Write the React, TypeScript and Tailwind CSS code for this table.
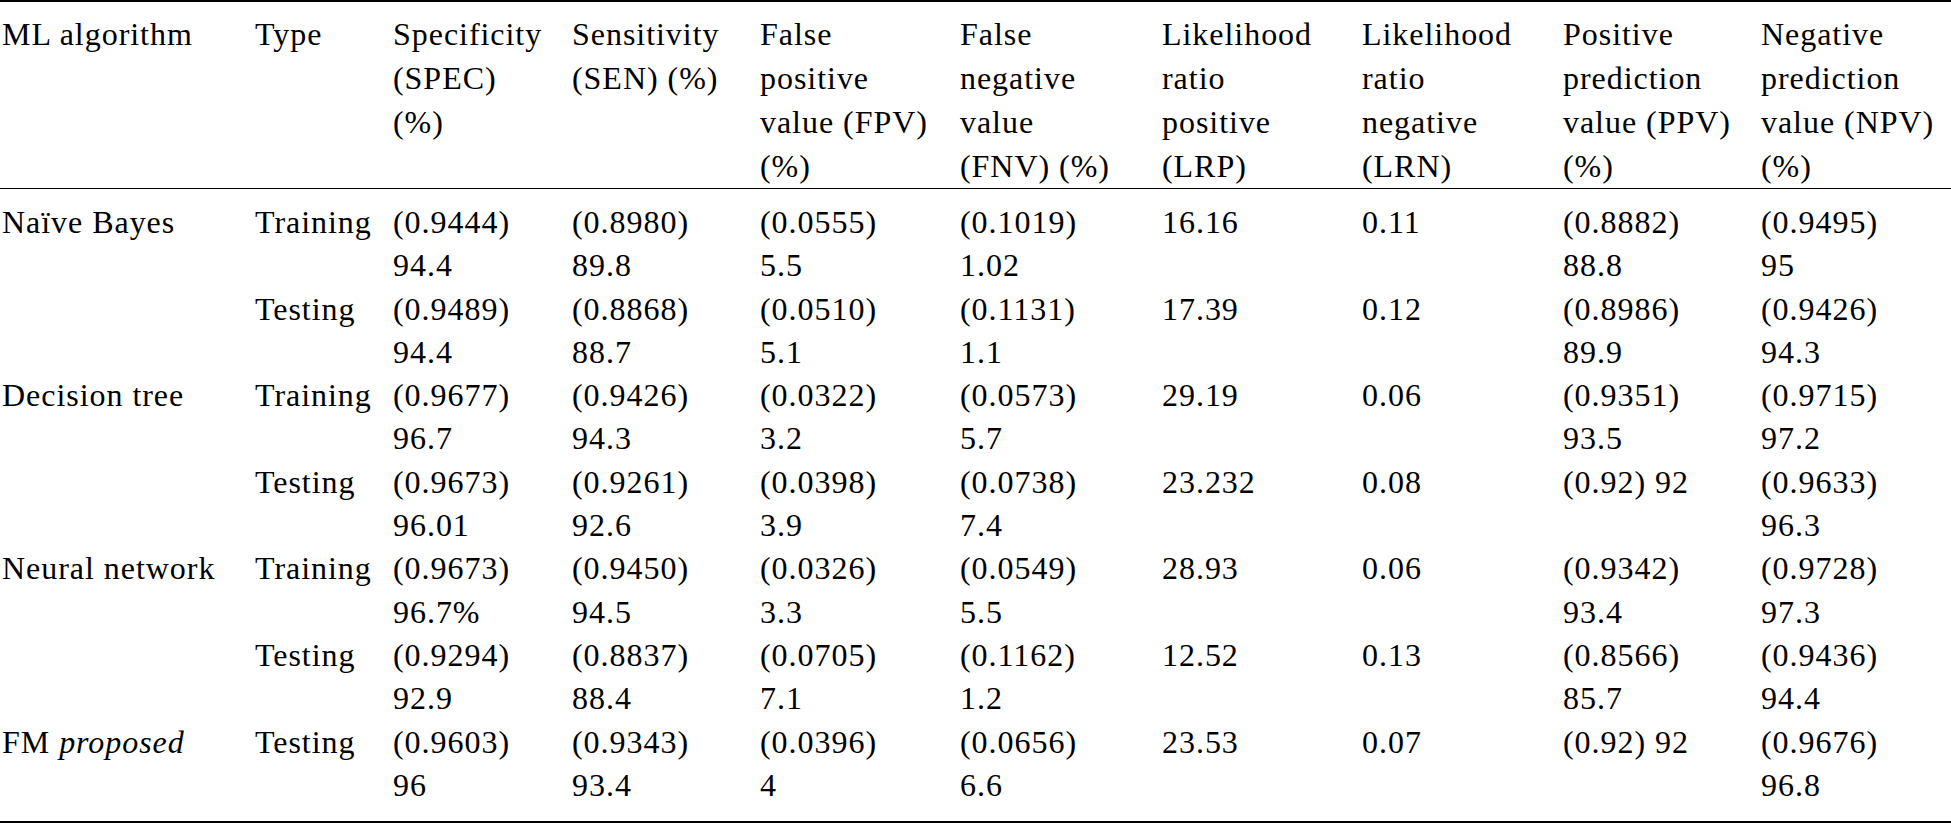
const headers = [
  'ML algorithm',
  'Type',
  'Specificity\n(SPEC)\n(%)',
  'Sensitivity\n(SEN) (%)',
  'False\npositive\nvalue (FPV)\n(%)',
  'False\nnegative\nvalue\n(FNV) (%)',
  'Likelihood\nratio\npositive\n(LRP)',
  'Likelihood\nratio\nnegative\n(LRN)',
  'Positive\nprediction\nvalue (PPV)\n(%)',
  'Negative\nprediction\nvalue (NPV)\n(%)',
];

const widths = [
  'w-[253px]',
  'w-[138px]',
  'w-[179px]',
  'w-[188px]',
  'w-[200px]',
  'w-[202px]',
  'w-[200px]',
  'w-[201px]',
  'w-[198px]',
  'w-[192px]',
];

type Row = { algo: string; italic?: string; type: string; values: string[] };

const rows: Row[] = [
  {
    algo: 'Naïve Bayes',
    type: 'Training',
    values: ['(0.9444)\n94.4', '(0.8980)\n89.8', '(0.0555)\n5.5', '(0.1019)\n1.02', '16.16', '0.11', '(0.8882)\n88.8', '(0.9495)\n95'],
  },
  {
    algo: '',
    type: 'Testing',
    values: ['(0.9489)\n94.4', '(0.8868)\n88.7', '(0.0510)\n5.1', '(0.1131)\n1.1', '17.39', '0.12', '(0.8986)\n89.9', '(0.9426)\n94.3'],
  },
  {
    algo: 'Decision tree',
    type: 'Training',
    values: ['(0.9677)\n96.7', '(0.9426)\n94.3', '(0.0322)\n3.2', '(0.0573)\n5.7', '29.19', '0.06', '(0.9351)\n93.5', '(0.9715)\n97.2'],
  },
  {
    algo: '',
    type: 'Testing',
    values: ['(0.9673)\n96.01', '(0.9261)\n92.6', '(0.0398)\n3.9', '(0.0738)\n7.4', '23.232', '0.08', '(0.92) 92', '(0.9633)\n96.3'],
  },
  {
    algo: 'Neural network',
    type: 'Training',
    values: ['(0.9673)\n96.7%', '(0.9450)\n94.5', '(0.0326)\n3.3', '(0.0549)\n5.5', '28.93', '0.06', '(0.9342)\n93.4', '(0.9728)\n97.3'],
  },
  {
    algo: '',
    type: 'Testing',
    values: ['(0.9294)\n92.9', '(0.8837)\n88.4', '(0.0705)\n7.1', '(0.1162)\n1.2', '12.52', '0.13', '(0.8566)\n85.7', '(0.9436)\n94.4'],
  },
  {
    algo: 'FM',
    italic: 'proposed',
    type: 'Testing',
    values: ['(0.9603)\n96', '(0.9343)\n93.4', '(0.0396)\n4', '(0.0656)\n6.6', '23.53', '0.07', '(0.92) 92', '(0.9676)\n96.8'],
  },
];

export default function App() {
  return (
    <div className="w-[1951px] h-[824px] bg-white text-black [font-family:Liberation_Serif,serif] text-[32px] tracking-[0.03em]">
      <table className="w-[1951px] table-fixed border-collapse">
        <colgroup>
          {widths.map((w, i) => (
            <col key={i} className={w} />
          ))}
        </colgroup>
        <thead>
          <tr className="border-t-2 border-b border-black">
            {headers.map((h, i) => (
              <th
                key={i}
                className="pl-[2px] pt-[10px] pb-0 text-left align-top font-normal leading-[44px] whitespace-pre-line"
              >
                {h}
              </th>
            ))}
          </tr>
        </thead>
        <tbody>
          {rows.map((r, ri) => {
            const first = ri === 0;
            const last = ri === rows.length - 1;
            const pad = first ? 'pt-[12px]' : last ? 'pb-[14px]' : '';
            return (
              <tr key={ri} className={last ? 'border-b-2 border-black' : ''}>
                <td className={`pl-[2px] align-top leading-[43.3px] whitespace-nowrap overflow-visible ${pad}`}>
                  {r.algo}
                  {r.italic && (
                    <>
                      {' '}
                      <i>{r.italic}</i>
                    </>
                  )}
                </td>
                <td className={`pl-[2px] align-top leading-[43.3px] whitespace-nowrap ${pad}`}>{r.type}</td>
                {r.values.map((v, vi) => (
                  <td key={vi} className={`pl-[2px] align-top leading-[43.3px] whitespace-pre-line ${pad}`}>
                    {v}
                  </td>
                ))}
              </tr>
            );
          })}
        </tbody>
      </table>
    </div>
  );
}
